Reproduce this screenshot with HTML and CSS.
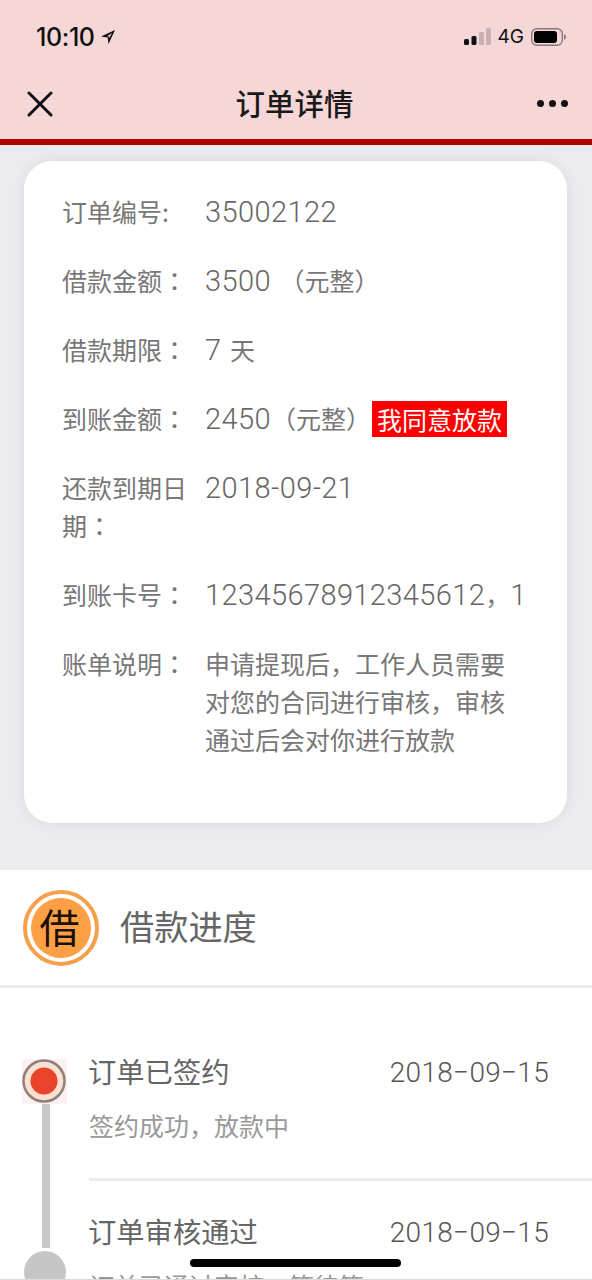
FILE: index.html
```html
<!DOCTYPE html>
<html lang="zh">
<head>
<meta charset="utf-8">
<title>订单详情</title>
<link rel="stylesheet" href="styles.css">
</head>
<body>
<div class="page">
  <header class="top">
    <div class="status">
      <div class="time"><span>10:10</span>
        <svg class="loc" width="16" height="16" viewBox="0 0 16 16"><path d="M15 1 L1 7.5 L7.6 8.4 L8.5 15 Z M12 4 L7 7.2 L8.8 7.3 L8.9 9.6 Z" fill="#111" fill-rule="evenodd"/></svg>
      </div>
      <div class="sys">
        <svg width="27" height="18" viewBox="0 0 27 18"><rect x="0" y="11" width="5" height="6" rx="1.500" fill="#111"/><rect x="7.500" y="8" width="5" height="9" rx="1.500" fill="#111"/><rect x="15" y="4" width="5" height="13" rx="1.500" fill="#c9b0b3"/><rect x="22" y="0" width="5" height="17" rx="1.500" fill="#c9b0b3"/></svg>
        <span class="net">4G</span>
        <svg width="36" height="18" viewBox="0 0 36 18"><rect x="0.7" y="0.7" width="30.6" height="16.6" rx="5" fill="none" stroke="#8a7779" stroke-width="1.4"/><rect x="3" y="3" width="23" height="12" rx="3" fill="#000"/><path d="M33 6 Q35 7 35 9 Q35 11 33 12 Z" fill="#8a7779"/></svg>
      </div>
    </div>
    <nav class="nav">
      <svg class="close" width="26" height="26" viewBox="0 0 26 26"><path d="M2 2 L24 24 M24 2 L2 24" stroke="#111" stroke-width="3" stroke-linecap="round"/></svg>
      <h1>订单详情</h1>
      <div class="more"><i></i><i></i><i></i></div>
    </nav>
  </header>
  <main class="content">
    <section class="card">
      <div class="row"><div class="label">订单编号:</div><div class="value"><span class="num">35002122</span></div></div>
      <div class="row"><div class="label">借款金额<span class="colon" lang="zh-Hant">：</span></div><div class="value"><span class="num">3500</span> （元整）</div></div>
      <div class="row"><div class="label">借款期限<span class="colon" lang="zh-Hant">：</span></div><div class="value"><span class="num">7</span> 天</div></div>
      <div class="row"><div class="label">到账金额<span class="colon" lang="zh-Hant">：</span></div><div class="value"><span class="num">2450</span>（元整）<span class="agree">我同意放款</span></div></div>
      <div class="row"><div class="label">还款到期日期<span class="colon" lang="zh-Hant">：</span></div><div class="value"><span class="num">2018-09-21</span></div></div>
      <div class="row"><div class="label">到账卡号<span class="colon" lang="zh-Hant">：</span></div><div class="value"><span class="num">12345678912345612</span>，<span class="num">1</span></div></div>
      <div class="row"><div class="label">账单说明<span class="colon" lang="zh-Hant">：</span></div><div class="value">申请提现后，工作人员需要对您的合同进行审核，审核通过后会对你进行放款</div></div>
    </section>
    <section class="progress">
      <div class="head">
        <div class="badge"><span>借</span></div>
        <h2>借款进度</h2>
      </div>
      <div class="timeline">
        <div class="step">
          <div class="rail">
            <svg class="dot" width="45" height="45" viewBox="0 0 45 45"><rect width="45" height="45" fill="#fbf1f1"/><circle cx="22" cy="22" r="20.500" fill="#fde0d0" stroke="#8f7f7c" stroke-width="2.500"/><circle cx="22" cy="22" r="13.500" fill="#e8432b"/></svg>
            <div class="line"></div>
          </div>
          <div class="body">
            <div class="title-row"><span class="step-title">订单已签约</span><span class="date">2018−09−15</span></div>
            <div class="desc">签约成功，放款中</div>
          </div>
        </div>
        <div class="step next">
          <div class="rail"><div class="dot-off"></div></div>
          <div class="body last">
            <div class="title-row"><span class="step-title">订单审核通过</span><span class="date">2018−09−15</span></div>
            <div class="desc">订单已通过审核，等待签</div>
          </div>
        </div>
      </div>
    </section>
  </main>
  <div class="home"></div>
</div>
</body>
</html>
```
FILE: styles.css
```css
* { box-sizing: border-box; }
html, body { margin: 0; padding: 0; }
body { font-family: "Noto Sans CJK SC", "Liberation Sans", sans-serif; background: #ececef; }
.page { position: relative; width: 592px; height: 1280px; overflow: hidden; background: #ececef; border-bottom: 1px solid #dcdcdc; }
.top { height: 145px; background: #f6d7d8; border-bottom: 6px solid #b00000; }
.status { height: 72px; padding: 21px 25px 0 36px; display: flex; justify-content: space-between; align-items: flex-start; }
.time { display: flex; align-items: center; gap: 5px; font-family: "Inter", "Liberation Sans", sans-serif; font-size: 25px; font-weight: 500; line-height: 32px; color: #111; letter-spacing: -0.4px; }
.sys { display: flex; align-items: center; gap: 7px; height: 32px; }
.net { font-family: "Inter", "Liberation Sans", sans-serif; font-size: 19px; color: #111; line-height: 32px; }
.nav { height: 67px; display: flex; align-items: center; justify-content: space-between; padding: 0 24px 0 27px; position: relative; }
.nav h1 { margin: 0; position: absolute; left: 0; right: 3px; text-align: center; font-size: 29.500px; font-weight: 500; line-height: 60px; top: 0; color: #1a1a1a; }
.close { margin-top: -4px; }
.more { display: flex; gap: 5px; margin-top: -4px; }
.more i { width: 7px; height: 7px; border-radius: 50%; background: #111; }
.content { display: flex; flex-direction: column; }
.card { margin: 16px 25px 0 24px; height: 662px; background: #fff; border-radius: 28px; box-shadow: 0 0 14px rgba(0,0,0,.08); padding: 31px 38px 0; display: flex; flex-direction: column; gap: 31px; }
.row { display: flex; font-size: 25px; line-height: 38px; color: #777; }
.label { width: 143px; padding-right: 16px; flex: none; }
.colon { font-family: "Noto Sans CJK TC", sans-serif; line-height: 1; }
.value { flex: 1; min-width: 0; word-spacing: 3px; }
.num { font-family: "Roboto", "Liberation Sans", sans-serif; font-weight: 300; font-size: 29px; line-height: 1; letter-spacing: 0.4px; color: #666; }
.agree { display: inline-block; vertical-align: top; margin: 2px 0 0 1px; background: #fe0000; color: #fff; line-height: 36px; padding: 0 5px; }
.progress { margin-top: 47px; background: #fff; height: 420px; }
.head { height: 118px; display: flex; align-items: center; padding-left: 23px; border-bottom: 3px solid #ececec; gap: 21px; }
.badge { width: 76px; height: 76px; border-radius: 50%; border: 4px solid #f6a04d; padding: 4px; background: #fff; }
.badge span { display: block; width: 100%; height: 100%; border-radius: 50%; background: #fd9f45; color: #1a1208; font-size: 40px; line-height: 56px; text-align: center; padding-right: 3px; }
.head h2 { margin: 0 0 6px; font-size: 34.200px; font-weight: 400; color: #666; line-height: 46px; }
.timeline { padding-top: 63px; }
.step { display: flex; }
.step.next { margin-top: 30px; }
.rail { width: 89px; flex: none; position: relative; height: 130px; }
.dot { position: absolute; left: 22px; top: 8px; display: block; }
.line { position: absolute; left: 42px; top: 53px; width: 8px; height: 144px; background: #c8c8c8; }
.dot-off { position: absolute; left: 24px; top: 40px; width: 42px; height: 42px; border-radius: 50%; background: #c6c6c6; }
.body { flex: 1; height: 130px; border-bottom: 3px solid #ececec; }
.body.last { border: 0; }
.title-row { display: flex; justify-content: space-between; padding-right: 43px; }
.step-title { font-size: 28.300px; line-height: 40px; color: #666; margin-left: -1px; }
.date { font-family: "Roboto", "Liberation Sans", sans-serif; font-weight: 300; font-size: 28px; line-height: 44px; color: #555; letter-spacing: 0.3px; }
.desc { margin-top: 14px; font-size: 25px; line-height: 36px; color: #999; position: relative; top: -2px; }
.home { position: absolute; left: 190px; top: 1259px; width: 211px; height: 8px; border-radius: 4px; background: #000; }
```
